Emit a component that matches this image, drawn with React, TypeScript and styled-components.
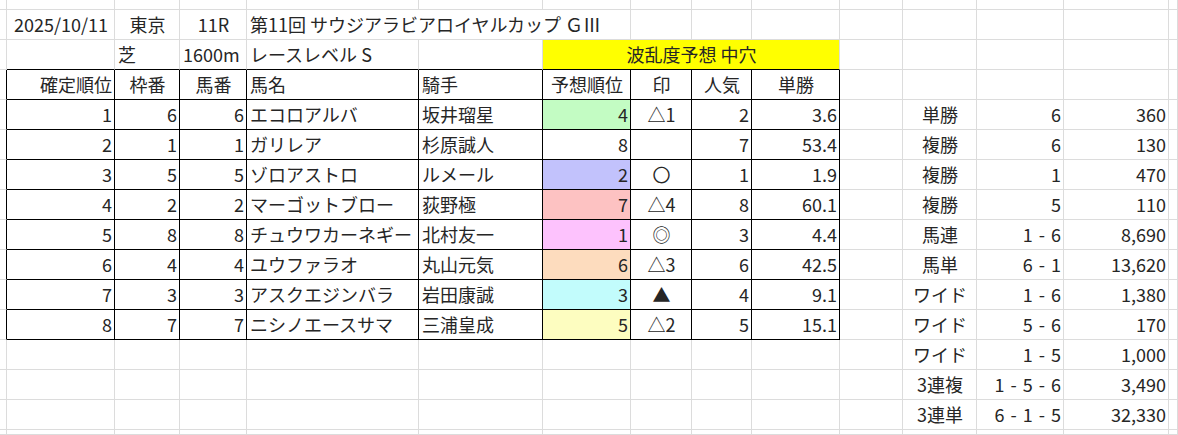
import React from 'react';
import styled, { createGlobalStyle } from 'styled-components';

const GlobalStyle = createGlobalStyle`
  html, body {
    margin: 0;
    padding: 0;
    background: #fff;
    overflow: hidden;
  }
  body {
    font-family: "Noto Sans CJK JP", "Noto Sans", sans-serif;
  }
`;

// column widths / row heights of the visible part of the sheet
const COLS = [7, 108, 65, 67, 172, 124, 88, 61, 60, 88, 63, 74, 87, 105, 9];
const ROWS = [10, ...Array(14).fill(30), 5];

const GRID = '#dcdcdc';
const LINE = '#000';

type Align = 'left' | 'center' | 'right';

interface CellDef {
  text?: string;
  align?: Align;
  bg?: string;
  span?: number;
  combo?: boolean;
}

const Sheet = styled.div`
  display: grid;
  grid-template-columns: ${COLS.map(w => `${w}px`).join(' ')};
  grid-template-rows: ${ROWS.map(h => `${h}px`).join(' ')};
  width: 1178px;
  height: 435px;
  overflow: hidden;
  color: #262626;
  font-size: 18px;
`;

const Cell = styled.div<{ $align: Align; $bg?: string; $rb: string; $bb: string; $span: number; $combo?: boolean }>`
  grid-column: span ${p => p.$span};
  box-sizing: border-box;
  border-right: 1px solid ${p => p.$rb};
  border-bottom: 1px solid ${p => p.$bb};
  background: ${p => p.$bg || 'transparent'};
  text-align: ${p => p.$align};
  line-height: 29px;
  padding: 0 2px 0 3px;
  white-space: pre;
  word-spacing: ${p => (p.$combo ? '2px' : 'normal')};
  overflow: visible;
  min-width: 0;
`;

const ranking = [
  { pos: '1', waku: '6', ban: '6', name: 'エコロアルバ', jockey: '坂井瑠星', pred: '4', predBg: '#c3fcc3', mark: '△1', pop: '2', odds: '3.6' },
  { pos: '2', waku: '1', ban: '1', name: 'ガリレア', jockey: '杉原誠人', pred: '8', predBg: undefined, mark: '', pop: '7', odds: '53.4' },
  { pos: '3', waku: '5', ban: '5', name: 'ゾロアストロ', jockey: 'ルメール', pred: '2', predBg: '#c2c2fc', mark: '〇', pop: '1', odds: '1.9' },
  { pos: '4', waku: '2', ban: '2', name: 'マーゴットブロー', jockey: '荻野極', pred: '7', predBg: '#fdc2c2', mark: '△4', pop: '8', odds: '60.1' },
  { pos: '5', waku: '8', ban: '8', name: 'チュウワカーネギー', jockey: '北村友一', pred: '1', predBg: '#fdc2fd', mark: '◎', pop: '3', odds: '4.4' },
  { pos: '6', waku: '4', ban: '4', name: 'ユウファラオ', jockey: '丸山元気', pred: '6', predBg: '#fddcbe', mark: '△3', pop: '6', odds: '42.5' },
  { pos: '7', waku: '3', ban: '3', name: 'アスクエジンバラ', jockey: '岩田康誠', pred: '3', predBg: '#c2fcfc', mark: '▲', pop: '4', odds: '9.1' },
  { pos: '8', waku: '7', ban: '7', name: 'ニシノエースサマ', jockey: '三浦皇成', pred: '5', predBg: '#fdfdc0', mark: '△2', pop: '5', odds: '15.1' },
];

const payouts = [
  ['単勝', '6', '360'],
  ['複勝', '6', '130'],
  ['複勝', '1', '470'],
  ['複勝', '5', '110'],
  ['馬連', '1 - 6', '8,690'],
  ['馬単', '6 - 1', '13,620'],
  ['ワイド', '1 - 6', '1,380'],
  ['ワイド', '5 - 6', '170'],
  ['ワイド', '1 - 5', '1,000'],
  ['3連複', '1 - 5 - 6', '3,490'],
  ['3連単', '6 - 1 - 5', '32,330'],
];

function buildCells(): Record<string, CellDef> {
  const m: Record<string, CellDef> = {};
  const put = (r: number, c: number, d: CellDef) => { m[`${r}-${c}`] = d; };

  put(1, 1, { text: '2025/10/11', align: 'center' });
  put(1, 2, { text: '東京', align: 'center' });
  put(1, 3, { text: '11R', align: 'center' });
  put(1, 4, { text: '第11回 サウジアラビアロイヤルカップ ＧⅢ', align: 'left', span: 3 });

  put(2, 2, { text: '芝', align: 'left' });
  put(2, 3, { text: '1600m', align: 'left' });
  put(2, 4, { text: 'レースレベル S', align: 'left' });
  put(2, 6, { text: '波乱度予想 中穴', align: 'center', bg: '#ffff00', span: 4 });

  const head: [string, Align][] = [
    ['確定順位', 'right'], ['枠番', 'center'], ['馬番', 'center'], ['馬名', 'left'], ['騎手', 'left'],
    ['予想順位', 'center'], ['印', 'center'], ['人気', 'center'], ['単勝', 'center'],
  ];
  head.forEach(([t, a], i) => put(3, i + 1, { text: t, align: a }));

  ranking.forEach((h, i) => {
    const r = 4 + i;
    put(r, 1, { text: h.pos, align: 'right' });
    put(r, 2, { text: h.waku, align: 'right' });
    put(r, 3, { text: h.ban, align: 'right' });
    put(r, 4, { text: h.name, align: 'left' });
    put(r, 5, { text: h.jockey, align: 'left' });
    put(r, 6, { text: h.pred, align: 'right', bg: h.predBg });
    put(r, 7, { text: h.mark, align: 'center' });
    put(r, 8, { text: h.pop, align: 'right' });
    put(r, 9, { text: h.odds, align: 'right' });
  });

  payouts.forEach(([kind, combo, yen], i) => {
    const r = 4 + i;
    put(r, 11, { text: kind, align: 'center' });
    put(r, 12, { text: combo, align: 'right', combo: true });
    put(r, 13, { text: yen, align: 'right' });
  });
  return m;
}

// the bordered result table: rows 3..11, columns A..I
const inTable = (r: number, c: number) => r >= 3 && r <= 11 && c >= 1 && c <= 9;

const App: React.FC = () => {
  const cells = buildCells();
  const out: React.ReactNode[] = [];

  ROWS.forEach((_, r) => {
    let c = 0;
    while (c < COLS.length) {
      const d = cells[`${r}-${c}`] || {};
      const span = d.span || 1;
      const last = c + span - 1;
      const rb = inTable(r, last) || inTable(r, last + 1) ? LINE : GRID;
      const bb = inTable(r, c) || inTable(r + 1, c) ? LINE : GRID;
      out.push(
        <Cell
          key={`${r}-${c}`}
          $align={d.align || 'left'}
          $bg={d.bg}
          $rb={rb}
          $bb={bb}
          $span={span}
          $combo={d.combo}
        >
          {d.text}
        </Cell>
      );
      c += span;
    }
  });

  return (
    <>
      <GlobalStyle />
      <Sheet>{out}</Sheet>
    </>
  );
};

export default App;
